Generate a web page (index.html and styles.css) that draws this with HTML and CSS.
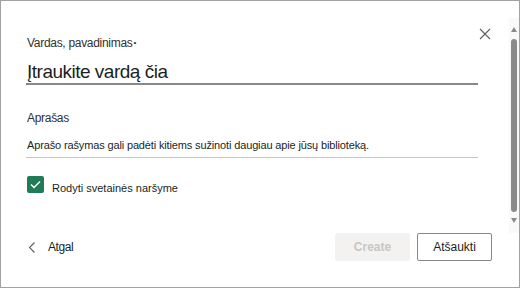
FILE: index.html
```html
<!DOCTYPE html>
<html lang="lt">
<head>
  <meta charset="UTF-8">
  <meta name="viewport" content="width=device-width, initial-scale=1.0">
  <title>Sukurti biblioteką</title>
  <link rel="stylesheet" href="styles.css">
</head>
<body>
  <div class="dialog">
    <!-- Main panel -->
    <div class="panel">
      <button class="close" aria-label="Uždaryti">
        <svg width="12" height="12" viewBox="0 0 12 12">
          <path d="M1 1 L11 11 M11 1 L1 11" stroke="#605e5c" stroke-width="1.1" fill="none"/>
        </svg>
      </button>

      <div class="form">
        <div class="field">
          <p class="label">Vardas, pavadinimas<span class="req">•</span></p>
          <p class="name-input">Įtraukite vardą čia</p>
        </div>

        <div class="field">
          <p class="label desc-label">Aprašas</p>
          <p class="desc-input">Aprašo rašymas gali padėti kitiems sužinoti daugiau apie jūsų biblioteką.</p>
        </div>

        <div class="check-row">
          <span class="checkbox">
            <svg width="11" height="9" viewBox="0 0 11 9">
              <path d="M1 4.5 L4 7.5 L10 1.5" stroke="#fff" stroke-width="1.4" fill="none"/>
            </svg>
          </span>
          <span class="check-text">Rodyti svetainės naršyme</span>
        </div>
      </div>

      <!-- Footer -->
      <div class="footer">
        <div class="back">
          <svg width="8" height="11" viewBox="0 0 8 11">
            <path d="M6.5 0.5 L1.5 5.5 L6.5 10.5" stroke="#605e5c" stroke-width="1.1" fill="none"/>
          </svg>
          <span>Atgal</span>
        </div>
        <div class="buttons">
          <button class="btn btn-create" disabled>Create</button>
          <button class="btn btn-cancel">Atšaukti</button>
        </div>
      </div>
    </div>

    <!-- Scrollbar -->
    <div class="scrollbar">
      <span class="arrow up"></span>
      <span class="thumb"></span>
      <span class="arrow down"></span>
    </div>
  </div>
</body>
</html>
```

FILE: styles.css
```css
/* General styles */
body {
  margin: 0;
  font-family: "Liberation Sans", Arial, sans-serif;
  color: #323130;
  background-color: #fff;
}

p {
  margin: 0;
}

.dialog {
  display: flex;
  width: 520px;
  height: 288px;
  box-sizing: border-box;
  border: 1px solid #a2a2a2;
}

/* Panel */
.panel {
  position: relative;
  flex: 1;
  display: flex;
  flex-direction: column;
}

.close {
  position: absolute;
  top: 27px;
  right: 18px;
  width: 12px;
  height: 12px;
  padding: 0;
  border: none;
  background: none;
}

.close svg {
  display: block;
}

.form {
  padding: 34px 31px 0 25px;
}

.label {
  font-size: 12px;
  line-height: 16px;
  letter-spacing: -0.3px;
  color: #323130;
  padding-left: 1px;
}

.req {
  font-size: 8px;
  vertical-align: 2px;
  margin-left: 1px;
}

.name-input {
  margin-top: 10px;
  font-size: 19px;
  line-height: 22px;
  letter-spacing: -0.5px;
  color: #201f1e;
  padding-left: 1px;
  border-bottom: 2px solid #8a8886;
}

.desc-label {
  margin-top: 25px;
}

.desc-input {
  margin-top: 11px;
  font-size: 11px;
  line-height: 16px;
  letter-spacing: -0.14px;
  color: #201f1e;
  padding: 0 0 4px 1px;
  border-bottom: 1px solid #c8c6c4;
}

/* Checkbox */
.check-row {
  display: flex;
  align-items: flex-start;
  margin-top: 18px;
  padding-left: 1px;
}

.checkbox {
  display: flex;
  align-items: center;
  justify-content: center;
  width: 17px;
  height: 17px;
  border-radius: 2px;
  background-color: #217a58;
}

.check-text {
  margin: 4px 0 0 8px;
  font-size: 11px;
  line-height: 16px;
  color: #201f1e;
}

/* Footer */
.footer {
  margin-top: auto;
  display: flex;
  align-items: center;
  justify-content: space-between;
  padding: 0 17px 26px 27px;
}

.back {
  display: flex;
  align-items: center;
  gap: 12px;
  font-size: 12px;
  letter-spacing: -0.4px;
  color: #201f1e;
}

.buttons {
  display: flex;
  gap: 7px;
}

.btn {
  width: 75px;
  height: 28px;
  padding: 0;
  border-radius: 2px;
  font-family: "Liberation Sans", Arial, sans-serif;
  font-size: 12px;
}

.btn-create {
  border: none;
  background-color: #f3f2f1;
  color: #c8c6c4;
  font-weight: bold;
}

.btn-cancel {
  border: 1px solid #8a8886;
  background-color: #fff;
  color: #201f1e;
}

/* Scrollbar */
.scrollbar {
  width: 10px;
  margin: 17px 0 54px;
  display: flex;
  flex-direction: column;
  align-items: center;
  background-color: #f9f9f9;
}

.arrow {
  width: 0;
  height: 0;
  border-left: 3px solid transparent;
  border-right: 3px solid transparent;
}

.arrow.up {
  margin-top: 9px;
  border-bottom: 5px solid #8a8a8a;
}

.arrow.down {
  margin-top: 6px;
  border-top: 5px solid #8a8a8a;
}

.thumb {
  width: 6px;
  height: 173px;
  margin-top: 7px;
  border-radius: 3px;
  background-color: #8a8a8a;
}
```
